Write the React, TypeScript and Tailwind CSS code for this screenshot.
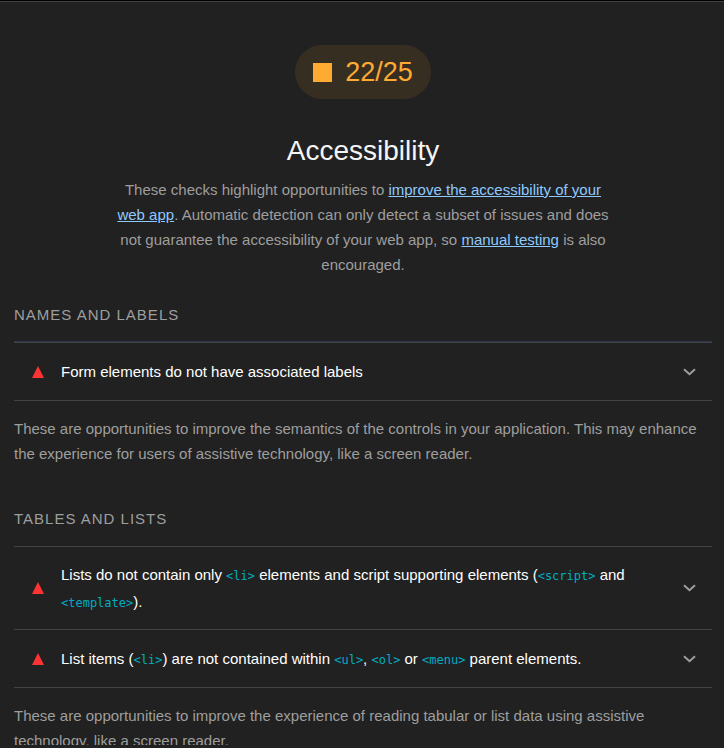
import type { ReactNode } from "react";

function Code({ children }: { children: ReactNode }) {
  return (
    <code className="font-['DejaVu_Sans_Mono',monospace] text-[12px] leading-none text-[#00acc1]">
      {children}
    </code>
  );
}

function Audit({ children, tall }: { children: ReactNode; tall?: boolean }) {
  return (
    <button
      type="button"
      className={`flex w-full items-center border-b border-[#424242] pr-4 pl-[18px] text-left text-white ${
        tall ? "py-[14px] leading-[27px]" : "py-4 leading-[25px]"
      }`}
    >
      <svg viewBox="0 0 12 12" className="size-3 shrink-0" fill="#ff3333" aria-hidden="true">
        <path d="M6 0 12 12H0Z" />
      </svg>
      <span className="ml-[17px] flex-1 pr-12">{children}</span>
      <svg
        viewBox="0 0 14 8"
        className="h-2 w-[14px] shrink-0"
        fill="none"
        stroke="#9e9e9e"
        strokeWidth="2"
        aria-hidden="true"
      >
        <path d="M2 1.2 7.5 6.2 13 1.2" />
      </svg>
    </button>
  );
}

interface GroupProps {
  title: string;
  children: ReactNode;
  description: string;
  focused?: boolean;
}

function Group({ title, children, description, focused }: GroupProps) {
  return (
    <section>
      <h2 className="tracking-[1px] uppercase">{title}</h2>
      <div
        className={`mt-[15px] border-t border-[#424242] ${focused ? "shadow-[0_-1px_0_#2b3750]" : ""}`}
      >
        {children}
      </div>
      <p className="mt-[15px]">{description}</p>
    </section>
  );
}

const linkClass = "text-[#8ecaff] underline";

export default function App() {
  return (
    <div className="h-screen overflow-hidden border-t border-black bg-[#212121] pb-[3px] font-['Liberation_Sans',Arial,sans-serif] text-[15px] leading-[25px] text-[#9e9e9e]">
      <main className="h-full overflow-hidden border-t border-[#424242] pr-3 pl-[14px]">
        <header className="flex flex-col items-center pt-[43px]">
          <div className="flex h-[54px] items-center rounded-full bg-[#372e22] px-[18px] text-[27px] text-[#ffaa33]">
            <span className="mr-[13px] size-[19px] bg-[#ffaa33]" />
            22/25
          </div>
          <h1 className="mt-8 text-[28px] leading-10 text-[#f5f5f5]">Accessibility</h1>
          <p className="mt-[6px] max-w-[500px] text-center">
            These checks highlight opportunities to{" "}
            <a href="#accessibility" className={linkClass}>
              improve the accessibility of your web app
            </a>
            . Automatic detection can only detect a subset of issues and does not guarantee the
            accessibility of your web app, so{" "}
            <a href="#manual" className={linkClass}>
              manual testing
            </a>{" "}
            is also encouraged.
          </p>
        </header>
        <div className="mt-[25px] flex flex-col gap-10">
          <Group
            focused
            title="Names and labels"
            description="These are opportunities to improve the semantics of the controls in your application. This may enhance the experience for users of assistive technology, like a screen reader."
          >
            <Audit>Form elements do not have associated labels</Audit>
          </Group>
          <Group
            title="Tables and lists"
            description="These are opportunities to improve the experience of reading tabular or list data using assistive technology, like a screen reader."
          >
            <Audit tall>
              Lists do not contain only <Code>&lt;li&gt;</Code> elements and script supporting
              elements (<Code>&lt;script&gt;</Code> and <Code>&lt;template&gt;</Code>).
            </Audit>
            <Audit>
              List items (<Code>&lt;li&gt;</Code>) are not contained within{" "}
              <Code>&lt;ul&gt;</Code>, <Code>&lt;ol&gt;</Code> or <Code>&lt;menu&gt;</Code> parent
              elements.
            </Audit>
          </Group>
        </div>
      </main>
    </div>
  );
}
